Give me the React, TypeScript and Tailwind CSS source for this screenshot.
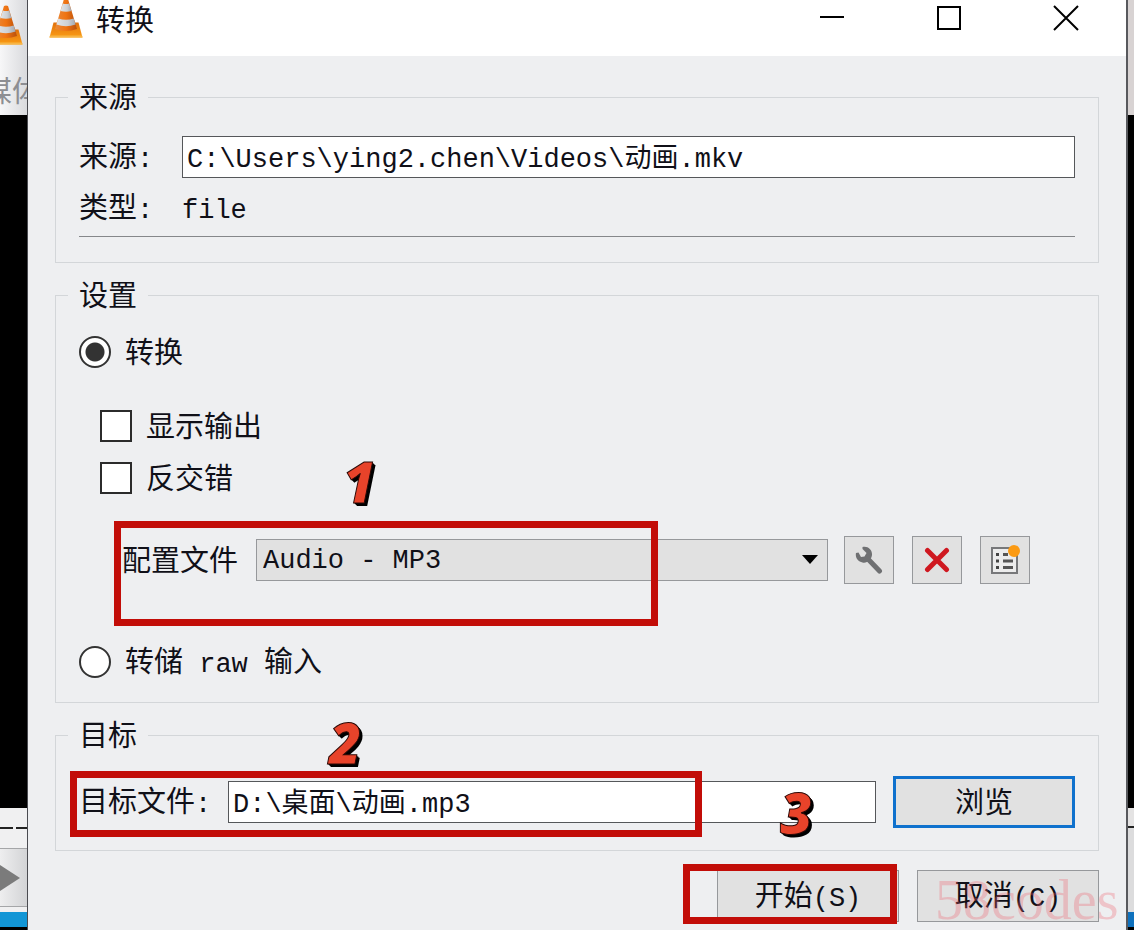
import React, { useState } from "react";

const inputClass =
  "h-[42px] min-w-0 flex-1 rounded-none border border-[#55575a] bg-white px-1 pb-1 font-['Liberation_Mono','Noto_Sans_CJK_SC',monospace] text-[27px] outline-none";
const pushClass =
  "h-[52px] w-[182px] shrink-0 bg-[#e1e1e1] pb-1 text-center";
const toolClass =
  "flex h-12 w-[50px] shrink-0 items-center justify-center border border-[#96989b] bg-[#e1e1e1]";

function Mono({ children }: { children: React.ReactNode }) {
  return (
    <span className="whitespace-pre font-['Liberation_Mono','Noto_Sans_CJK_SC',monospace] text-[27px] leading-none">
      {children}
    </span>
  );
}

function Cone({ className }: { className: string }) {
  return (
    <svg viewBox="0 0 34 40" className={className} aria-hidden="true">
      <defs>
        <linearGradient id="cone" x1="0" x2="1">
          <stop offset="0" stopColor="#e98a3c" />
          <stop offset="0.5" stopColor="#f07412" />
          <stop offset="1" stopColor="#b8500c" />
        </linearGradient>
        <linearGradient id="base" x1="0" y1="0" x2="0" y2="1">
          <stop offset="0" stopColor="#e0700c" />
          <stop offset="1" stopColor="#fb9d14" />
        </linearGradient>
        <linearGradient id="stripe" x1="0" x2="1">
          <stop offset="0" stopColor="#e2e5e8" />
          <stop offset="0.6" stopColor="#cdd0d4" />
          <stop offset="1" stopColor="#a3a7ad" />
        </linearGradient>
      </defs>
      <path d="M4.500 24.500H29.500L33.500 39.500H0.500Z" fill="url(#base)" />
      <path d="M15 1Q17 0 19 1L28 31Q17 35 6 31Z" fill="url(#cone)" />
      <path d="M13.800 5.500Q17 6.500 20.200 5.500L22.500 13Q17 14.500 11.500 13Z" fill="url(#stripe)" />
      <path d="M9.300 20.500Q17 23 24.700 20.500L26.600 26.500Q17 30 7.400 26.500Z" fill="url(#stripe)" />
      <path d="M1 37.500H33L33.500 39.500H0.500Z" fill="#f7b545" />
    </svg>
  );
}

function Step({ children, className }: { children: string; className: string }) {
  return (
    <span
      className={`pointer-events-none absolute font-['Open_Sans',sans-serif] text-[56px] leading-[60px] font-extrabold text-[#e8432a] italic [-webkit-text-stroke:1px_#2a0805] [text-shadow:1px_1px_0_#000,2px_2px_0_#000,3px_3px_0_#000] ${className}`}
    >
      {children}
    </span>
  );
}

function Group({ title, children }: { title: string; children: React.ReactNode }) {
  return (
    <fieldset className="min-w-0 border border-[#d3d6d9] px-3">
      <legend className="px-[11px] pb-1">{title}</legend>
      <div className="px-[11px]">{children}</div>
    </fieldset>
  );
}

function Radio({
  id,
  checked,
  onChange,
  children,
}: {
  id: string;
  checked: boolean;
  onChange: () => void;
  children: React.ReactNode;
}) {
  return (
    <div className="flex h-10 items-center gap-[14px]">
      <input
        type="radio"
        id={id}
        name="mode"
        checked={checked}
        onChange={onChange}
        className="h-8 w-8 appearance-none rounded-full border-2 border-[#333] bg-white checked:bg-[radial-gradient(circle,#333_9px,#fff_10px)]"
      />
      <label htmlFor={id} className="pb-1">{children}</label>
    </div>
  );
}

function Check({ id, children }: { id: string; children: React.ReactNode }) {
  return (
    <div className="flex h-10 items-center gap-[14px] pl-[21px]">
      <input
        type="checkbox"
        id={id}
        className="h-8 w-8 appearance-none border-2 border-[#2b2b2b] bg-white checked:bg-[#333]"
      />
      <label htmlFor={id} className="pb-1">{children}</label>
    </div>
  );
}

export default function App() {
  const [mode, setMode] = useState("convert");
  const [source, setSource] = useState("C:\\Users\\ying2.chen\\Videos\\动画.mkv");
  const [target, setTarget] = useState("D:\\桌面\\动画.mp3");

  return (
    <div className="flex min-h-screen overflow-hidden bg-white font-['Noto_Sans_CJK_SC',sans-serif] text-[29px] leading-9 text-[#101018]">
      <div className="flex w-7 shrink-0 flex-col overflow-hidden border-r border-[#4a4b50] bg-black pb-[3px]">
        <div className="h-[115px] bg-linear-to-r from-[#f7f7f8] to-[#d9dadd] pt-[5px]">
          <Cone className="-ml-[11px] h-10 w-[34px]" />
          <div className="mt-[26px] -ml-[17px] w-16 text-[#8d8e92]">媒体</div>
        </div>
        <div className="flex-1" />
        <div className="flex h-[41px] items-center gap-[3px] border-b border-[#a5a6a8] bg-[#f0f0f1]">
          <div className="h-0.5 w-[13px] bg-[#222]" />
          <div className="h-0.5 w-[11px] bg-[#222]" />
        </div>
        <div className="flex h-[58px] items-center border-b border-[#a5a6a8] bg-linear-to-r from-[#eeeeef] to-[#d3d4d6]">
          <svg viewBox="0 0 20 26" className="h-[26px] w-5" aria-hidden="true">
            <path d="M0 0L20 13L0 26Z" fill="#7b7b7b" />
          </svg>
        </div>
        <div className="h-[5px] bg-[#f0f0f1]" />
        <div className="h-[15px] bg-[#1296d6]" />
      </div>

      <main className="min-w-0 flex-1 bg-[#eeeff1]">
        <header className="flex h-14 bg-white pr-0.5 pl-[21px]">
          <Cone className="-mt-0.5 h-10 w-[34px] shrink-0" />
          <h1 className="ml-[13px] flex-1">转换</h1>
          <button aria-label="最小化" className="flex h-9 w-[117px] items-center justify-center">
            <svg viewBox="0 0 26 26" className="h-[26px] w-[26px]">
              <path d="M1 12H25" stroke="#000" strokeWidth="2" />
            </svg>
          </button>
          <button aria-label="最大化" className="flex h-9 w-[117px] items-center justify-center">
            <svg viewBox="0 0 26 26" className="h-[26px] w-[26px]">
              <rect x="2" y="2" width="22" height="22" fill="none" stroke="#000" strokeWidth="2" />
            </svg>
          </button>
          <button aria-label="关闭" className="flex h-9 w-[117px] items-center justify-center">
            <svg viewBox="0 0 26 26" className="h-[26px] w-[26px]">
              <path d="M1 1L25 25M25 1L1 25" stroke="#000" strokeWidth="2" />
            </svg>
          </button>
        </header>

        <form className="flex flex-col gap-3 px-[27px] pt-[21px]" onSubmit={(e) => e.preventDefault()}>
          <Group title="来源">
            <div className="flex items-center pt-[19px]">
              <label htmlFor="source" className="w-[103px] shrink-0 pb-1">
                来源<Mono>:</Mono>
              </label>
              <input
                id="source"
                value={source}
                onChange={(e) => setSource(e.target.value)}
                className={inputClass}
              />
            </div>
            <div className="mt-[9px] flex h-[50px] items-baseline border-b border-[#85878a]">
              <span className="w-[103px] shrink-0">
                类型<Mono>:</Mono>
              </span>
              <Mono>file</Mono>
            </div>
            <div className="h-[25px]" />
          </Group>

          <Group title="设置">
            <div className="pt-[17px] pb-5">
              <Radio id="convert" checked={mode === "convert"} onChange={() => setMode("convert")}>
                转换
              </Radio>
              <div className="mt-[34px] flex flex-col gap-3">
                <Check id="display">显示输出</Check>
                <Check id="deinterlace">反交错</Check>
              </div>
              <div className="relative mt-[38px] flex items-center pl-[43px]">
                <label htmlFor="profile" className="w-[134px] shrink-0 pb-1">
                  配置文件
                </label>
                <div className="relative flex min-w-0 flex-1">
                  <select
                    id="profile"
                    className="h-[42px] w-full appearance-none rounded-none border border-[#96989b] bg-[#e1e1e1] px-1.5 pt-0.5 font-['Liberation_Mono',monospace] text-[27px] outline-none"
                  >
                    <option>Audio - MP3</option>
                  </select>
                  <svg
                    viewBox="0 0 16 9"
                    className="pointer-events-none absolute top-4 right-2.5 h-[9px] w-4"
                    aria-hidden="true"
                  >
                    <path d="M0 0H16L8 9Z" fill="#000" />
                  </svg>
                </div>
                <div className="mr-[45px] ml-4 flex gap-[18px]">
                  <button type="button" aria-label="编辑配置" className={toolClass}>
                    <svg viewBox="0 0 28 28" className="h-7 w-7">
                      <path d="M12.500 12.500L24.500 25" stroke="#6f7072" strokeWidth="5" strokeLinecap="round" />
                      <path
                        d="M7.500 1C12.500 -0.500 17.500 3.500 17 9C16.500 14 12 17.500 7.500 16.500C3 15.500 0 11.500 1 7L3.500 6.500L6 11L9.500 10.500L11.500 7L7.500 3Z"
                        fill="#6f7072"
                      />
                    </svg>
                  </button>
                  <button type="button" aria-label="删除配置" className={toolClass}>
                    <svg viewBox="0 0 26 26" className="h-[26px] w-[26px]">
                      <path d="M3.500 3.500L22.500 22.500M22.500 3.500L3.500 22.500" stroke="#cf1820" strokeWidth="5" strokeLinecap="round" />
                    </svg>
                  </button>
                  <button type="button" aria-label="新建配置" className={toolClass}>
                    <svg viewBox="0 0 32 32" className="h-8 w-8">
                      <rect x="3" y="4" width="25" height="25" fill="#ececec" stroke="#77787a" strokeWidth="2" />
                      <path d="M7 10.500H10M7 17H10M7 23.500H10" stroke="#444" strokeWidth="3" />
                      <path d="M14 10.500H19M14 17H24M14 23.500H24" stroke="#555" strokeWidth="3" />
                      <circle cx="25" cy="7" r="6" fill="#fb9a12" />
                    </svg>
                  </button>
                </div>
                <div className="pointer-events-none absolute -top-[15px] left-[35px] h-[105px] w-[544px] border-[7px] border-[#c20d08]" />
                <Step className="-top-[85px] left-[264px]">1</Step>
              </div>
              <div className="mt-[58px]">
                <Radio id="dump" checked={mode === "dump"} onChange={() => setMode("dump")}>
                  转储<Mono> raw </Mono>输入
                </Radio>
              </div>
            </div>
          </Group>

          <Group title="目标">
            <div className="pt-[21px] pb-[22px]">
              <div className="relative flex items-center">
                <label htmlFor="target" className="w-[149px] shrink-0 pb-1">
                  目标文件<Mono>:</Mono>
                </label>
                <input
                  id="target"
                  value={target}
                  onChange={(e) => setTarget(e.target.value)}
                  className={inputClass}
                />
                <button type="button" className={`${pushClass} ml-[17px] border-[3px] border-[#0f71cd]`}>
                  浏览
                </button>
                <div className="pointer-events-none absolute -top-[5px] -left-[9px] h-[66px] w-[632px] border-[7px] border-[#c20d08]" />
                <Step className="-top-16 left-[250px]">2</Step>
                <Step className="top-1.5 left-[701px]">3</Step>
              </div>
            </div>
          </Group>

          <div className="mt-[7px] flex justify-end gap-[18px] pb-2">
            <div className="relative">
              <button type="submit" className={`${pushClass} border border-[#96989b]`}>
                开始<Mono>(S)</Mono>
              </button>
              <div className="pointer-events-none absolute -top-1.5 right-0.5 h-[60px] w-[214px] border-[7px] border-[#c20d08]" />
            </div>
            <div className="relative">
              <button type="button" className={`${pushClass} border border-[#96989b]`}>
                取消<Mono>(C)</Mono>
              </button>
              <span className="pointer-events-none absolute top-0 left-[18px] font-['Liberation_Serif',serif] text-[56px] leading-[60px] text-[#f0606c]/30">
                58codes
              </span>
            </div>
          </div>
        </form>
      </main>

      <div className="flex w-2 shrink-0 flex-col border-l-2 border-[#58595d] bg-black pb-[3px]">
        <div className="h-[115px] bg-[#d8d3d3]" />
        <div className="flex-1" />
        <div className="h-[18px] bg-[#e4e3e3]" />
        <div className="h-0.5 bg-[#222]" />
        <div className="h-[84px] bg-[#dcdcdd]" />
        <div className="h-[15px] bg-[#0f71bd]" />
      </div>
    </div>
  );
}
